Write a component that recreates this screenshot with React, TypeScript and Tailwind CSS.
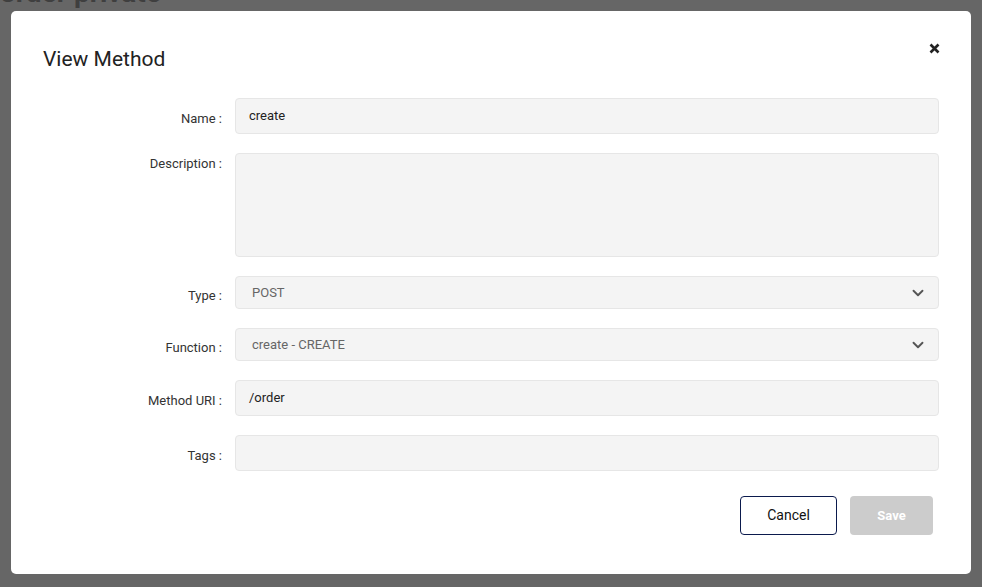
import { ChevronDown } from 'lucide-react'

interface Field {
  label: string
  value: string
  kind: 'input' | 'textarea' | 'select'
}

const fields: Field[] = [
  { label: 'Name :', value: 'create', kind: 'input' },
  { label: 'Description :', value: '', kind: 'textarea' },
  { label: 'Type :', value: 'POST', kind: 'select' },
  { label: 'Function :', value: 'create - CREATE', kind: 'select' },
  { label: 'Method URI :', value: '/order', kind: 'input' },
  { label: 'Tags :', value: '', kind: 'input' },
]

function FieldRow({ field }: { field: Field }) {
  const box = 'w-full rounded-[4px] border border-[#e6e6e6] bg-[#f4f4f4] text-[13px] text-[#222]'

  return (
    <div className={`flex ${field.kind === 'textarea' ? 'items-start' : 'items-center'}`}>
      <label
        className={`w-[179px] shrink-0 text-right text-[13px] text-[#333] ${
          field.kind === 'textarea' ? 'pt-[1px]' : 'pt-[6px]'
        }`}
      >
        {field.label}
      </label>
      <div className="ml-[13px] flex-1">
        {field.kind === 'input' && (
          <div className={`${box} flex h-[36px] items-center px-[13px]`}>{field.value}</div>
        )}
        {field.kind === 'textarea' && <div className={`${box} h-[104px]`} />}
        {field.kind === 'select' && (
          <div className={`${box} flex h-[33px] items-center justify-between pl-[16px] pr-[8px] text-[#666]`}>
            <span>{field.value}</span>
            <ChevronDown size={18} strokeWidth={2.5} className="mr-[3px] text-[#555]" />
          </div>
        )}
      </div>
    </div>
  )
}

export default function App() {
  return (
    <div className="relative h-[587px] w-[982px] overflow-hidden bg-[#666] font-['Roboto',sans-serif]">
      {/* page behind the dim overlay */}
      <div className="-mt-[28px] text-[28px] font-bold text-[#3f3f3f]">order private</div>

      <div className="absolute inset-0 px-[11px] pt-[11px]">
        <div className="relative h-[563px] rounded-[5px] bg-white pl-[32px] pr-[32px] pt-[35px]">
          <button className="absolute right-[30px] top-[31px] p-[1px] text-[#222]">
            <svg width="11" height="11" viewBox="0 0 11 11">
              <path d="M1.5 1.5 9.5 9.5M9.5 1.5 1.5 9.5" stroke="currentColor" strokeWidth="2.6" />
            </svg>
          </button>

          <h2 className="pt-[1px] text-[21px] leading-[24px] text-[#222]">View Method</h2>

          <div className="mt-[27px] flex flex-col gap-[19px]">
            {fields.map(f => (
              <FieldRow key={f.label} field={f} />
            ))}
          </div>

          <div className="mr-[6px] mt-[25px] flex justify-end gap-[13px]">
            <button className="h-[39px] w-[97px] rounded-[4px] border border-[#0b1a4d] bg-white text-[14px] text-[#111]">
              Cancel
            </button>
            <button disabled className="h-[39px] w-[83px] rounded-[4px] bg-[#cccccc] text-[13px] font-bold text-white">
              Save
            </button>
          </div>
        </div>
      </div>
    </div>
  )
}
